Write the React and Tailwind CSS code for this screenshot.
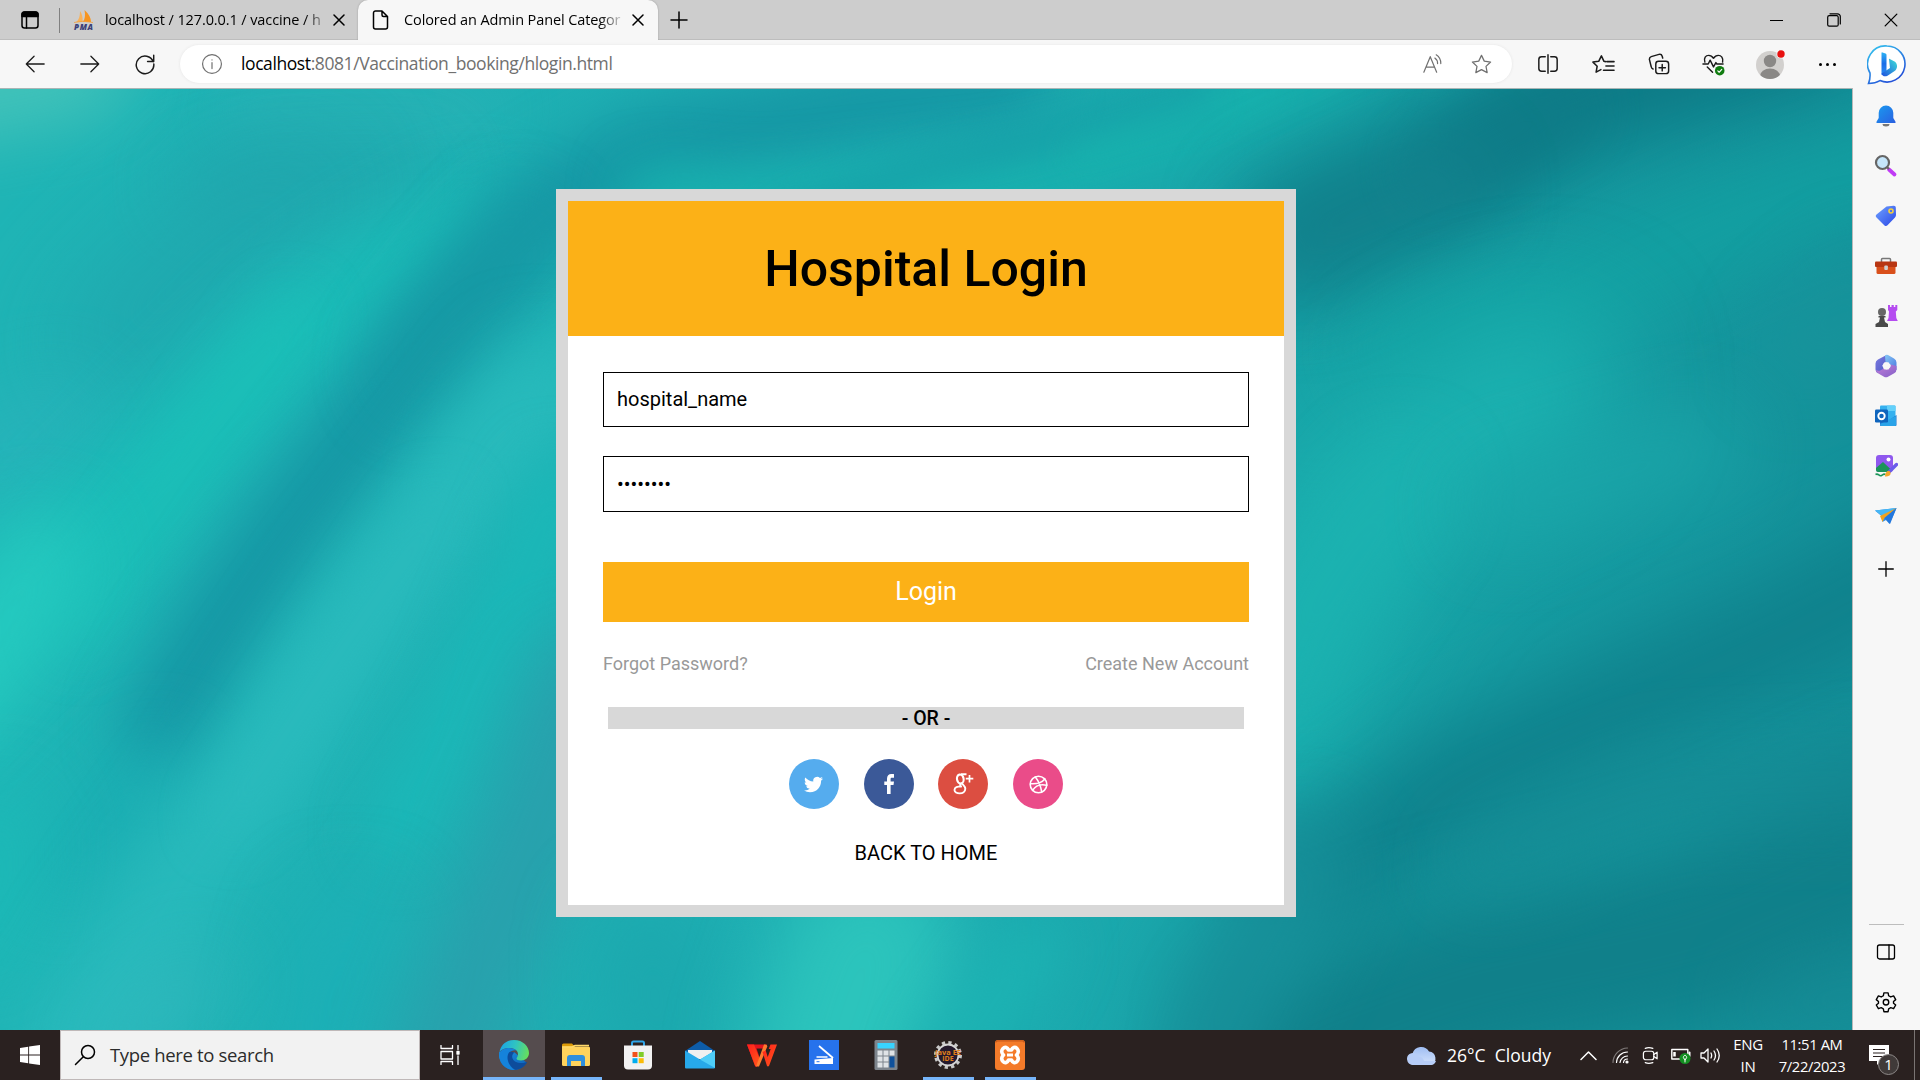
import React from "react";

const UI = "font-['Open_Sans','Noto_Sans',sans-serif]";

function Icon({ s = 24, vb = "0 0 24 24", w = 1.3, className = "", children }) {
  return (
    <svg width={s} height={s} viewBox={vb} fill="none" stroke="currentColor" strokeWidth={w} strokeLinecap="round" strokeLinejoin="round" className={`shrink-0 ${className}`}>
      {children}
    </svg>
  );
}

const Close = ({ s = 12, w = 1.3 }) => (
  <Icon s={s} vb="0 0 12 12" w={w}><path d="M1 1l10 10M11 1L1 11" /></Icon>
);

function TabBar() {
  return (
    <div className="flex h-10 w-full bg-[#cdcdcd] shadow-[inset_0_-1px_0_#bdbdbd]">
      <div className="flex w-[60px] items-center justify-end gap-[20px]">
        <Icon s={18} vb="0 0 18 18" w={1.5}>
          <rect x="1" y="1" width="16" height="16" rx="2.5" />
          <path d="M1 3.5a2.5 2.5 0 0 1 2.500-2.500h11a2.500 2.500 0 0 1 2.500 2.500V5.500H1z" fill="currentColor" />
          <path d="M5.500 6v11" />
        </Icon>
        <div className="h-[25px] w-px bg-[#808080]" />
      </div>
      <div className="flex w-[298px] items-center">
        <svg width="22" height="20" viewBox="0 0 22 20" className="ml-[13px] shrink-0">
          <path d="M3 12C6 10 7 6 7 1c2 3 3 6 2.500 11z" fill="#f8b25a" />
          <path d="M10 12c2-3 2.500-7 1.500-12C16 4 18 8 18 12z" fill="#f7941e" />
          <path d="M1 12.500q9-2.500 19 0" stroke="#f0a040" strokeWidth=".8" fill="none" />
          <text x="1" y="19.500" fontSize="8" fontWeight="800" fontStyle="italic" fontFamily="Open Sans" fill="#3b3f77" textLength="19">PMA</text>
        </svg>
        <div className="ml-[10px] w-[217px] whitespace-nowrap text-[14.500px] tracking-[-0.1px] text-black [mask-image:linear-gradient(90deg,#000_92%,transparent_104%)]">localhost / 127.0.0.1 / vaccine / h</div>
        <div className="ml-[11px]"><Close w={1.5} /></div>
      </div>
      <div className="flex w-[300px] items-center rounded-t-[10px] bg-[#f7f7f7] shadow-[0_0_2px_#999] [clip-path:inset(-4px_-4px_0_-4px)]">
        <Icon s={20} vb="0 0 20 20" w={1.500} className="ml-[13px]">
          <path d="M4.500 1H11l5.500 5.500V17a2 2 0 0 1-2 2h-10a2 2 0 0 1-2-2V3a2 2 0 0 1 2-2zM11 1v4a1.500 1.500 0 0 0 1.500 1.500h4" />
        </Icon>
        <div className="ml-[13px] w-[217px] whitespace-nowrap text-[14.500px] tracking-[-0.11px] text-black [mask-image:linear-gradient(90deg,#000_90%,transparent_102%)]">Colored an Admin Panel Categor</div>
        <div className="ml-[11px]"><Close w={1.500} /></div>
      </div>
      <div className="flex w-[42px] items-center justify-center"><Icon s={18} vb="0 0 18 18" w={1.500}><path d="M9 1v16M1 9h16" /></Icon></div>
      <div className="ml-auto flex items-center">
        <div className="flex w-[58px] justify-center"><div className="h-px w-[13px] bg-black" /></div>
        <div className="flex w-[57px] justify-center">
          <Icon s={14} vb="0 0 14 14" w={1.200}><rect x=".7" y="2.700" width="10.500" height="10.500" rx="1.500" /><path d="M3 .8h7.500a2.800 2.800 0 0 1 2.800 2.800V11" /></Icon>
        </div>
        <div className="flex w-[58px] justify-center"><Close s={14} w={1.100} /></div>
      </div>
    </div>
  );
}

const starPath = "M12 2.500l2.900 6 6.600.9-4.800 4.600 1.200 6.500L12 17.400l-5.900 3.100 1.200-6.500L2.500 9.400l6.600-.9z";

function Toolbar() {
  return (
    <div className="flex h-12 w-full items-center bg-[#f7f7f7] text-[#1b1b1b]">
      <div className="flex w-[173px] pl-[7px]">
        <div className="flex w-[55px] justify-center"><Icon s={22} w={1.400}><path d="M22 12H2.500M11 3.500L2.500 12l8.500 8.500" /></Icon></div>
        <div className="flex w-[55px] justify-center"><Icon s={22} w={1.400}><path d="M2 12h19.500M13 3.500l8.500 8.500-8.500 8.500" /></Icon></div>
        <div className="flex w-[55px] justify-center"><Icon s={22} w={1.600}><path d="M21 9.500A9.600 9.600 0 1 0 21.600 12M21.500 2.500v6.700h-6.700" /></Icon></div>
      </div>
      <div className="ml-[7px] flex h-[38px] w-[1332px] items-center rounded-full bg-white text-[#707070] shadow-[0_0_3px_#e4e4e4]">
        <Icon s={22} w={1.300} className="ml-[21px]"><circle cx="12" cy="12" r="10.300" /><path d="M12 10.500v6.500M12 7.400v.2" /></Icon>
        <div className="ml-[18px] mb-px whitespace-nowrap text-[17.500px] tracking-[-0.41px]"><span className="text-black">localhost</span>:8081/Vaccination_booking/hlogin.html</div>
        <Icon s={22} w={1.300} className="ml-auto"><path d="M2 21L9 4l7 17M4.500 15.500h9M14 5.500a7 7 0 0 1 3 6M15.500 2a11 11 0 0 1 5 9.500" /></Icon>
        <Icon s={23} w={1.300} className="ml-[26px] mr-[19px]"><path d={starPath} /></Icon>
      </div>
      <div className="ml-[8px] flex flex-1 items-center">
        <div className="flex w-[55px] justify-center"><Icon s={22} w={1.600}><path d="M12 2v20M9 4H5a3 3 0 0 0-3 3v10a3 3 0 0 0 3 3h4M15 4h4a3 3 0 0 1 3 3v10a3 3 0 0 1-3 3h-4" /></Icon></div>
        <div className="flex w-[56px] justify-center"><Icon s={23} w={1.600}><path d="M14 9l-1.500-.3L9.800 3 7 8.700 1 9.500l4.400 4.300L4.300 20l5-2.600M15.500 9H23M14.500 13.500H23M12 18h11" /></Icon></div>
        <div className="flex w-[55px] justify-center"><Icon s={22} w={1.600}><rect x="8.500" y="9" width="14" height="13.500" rx="3" /><path d="M15.500 12.500v7M12 16h7M5.500 17.500A3 3 0 0 1 3.500 15L1.500 7A3 3 0 0 1 3.500 4L12 1.500A3 3 0 0 1 15.500 3.500L16 5.500" /></Icon></div>
        <div className="flex w-[55px] justify-center">
          <Icon s={23} w={1.500}>
            <path d="M3 9.500C1.500 5 4 2.500 7 2.500c2.500 0 4 1.500 5 3 1-1.500 2.500-3 5-3 3 0 5.500 2.500 4.500 7M1 11.500h5.500l2-4 3.500 7 2.500-4.500 1 1.500H22M5.500 14.500l5.500 5.500" />
            <circle cx="18.500" cy="18.500" r="5" fill="#107c10" stroke="none" /><path d="M16.500 18.700l1.400 1.400 2.700-3" stroke="#fff" strokeWidth="1.200" />
          </Icon>
        </div>
        <div className="flex w-[59px] justify-center">
          <svg width="32" height="34" viewBox="0 0 32 34" className="shrink-0">
            <defs><clipPath id="avatar"><circle cx="15" cy="18" r="14" /></clipPath></defs>
            <circle cx="15" cy="18" r="14" fill="#d2d0ce" />
            <g clipPath="url(#avatar)" fill="#8a8886"><circle cx="15" cy="14" r="6.200" /><ellipse cx="15" cy="29" rx="10" ry="7.500" /></g>
            <circle cx="26" cy="7" r="4.500" fill="#f7f7f7" /><circle cx="26" cy="7" r="3.700" fill="#e81010" />
          </svg>
        </div>
        <div className="flex w-[55px] justify-center gap-[4px]"><i className="size-[3px] rounded-full bg-black" /><i className="size-[3px] rounded-full bg-black" /><i className="size-[3px] rounded-full bg-black" /></div>
        <svg width="40" height="42" viewBox="0 0 40 42" className="ml-[12px]">
          <defs>
            <linearGradient id="bingRing" x1="0" y1="0" x2=".6" y2="1"><stop stopColor="#35c8ef" /><stop offset="1" stopColor="#2450d8" /></linearGradient>
            <linearGradient id="bingB" x1="0" y1="0" x2="0" y2="1"><stop stopColor="#2cb4f5" /><stop offset=".5" stopColor="#1b6de8" /><stop offset="1" stopColor="#2b8cf4" /></linearGradient>
            <linearGradient id="bingC" x1="0" y1="1" x2="1" y2="0"><stop stopColor="#1e50df" /><stop offset="1" stopColor="#3fe0d8" /></linearGradient>
          </defs>
          <path d="M20 3a18 18 0 1 1-7 34.600C9 40 5 40.500 1.500 40.500 3 37 3.300 34 3 30A18 18 0 0 1 20 3z" fill="#fff" stroke="url(#bingRing)" strokeWidth="1.600" />
          <path d="M14.500 10q0-1 1-.6l3 1.200q1 .4 1 1.500V28l-5 4z" fill="url(#bingB)" />
          <path d="M22 16.500q-.4-1 .8-.6l5.200 2.800c3 2.500 2.500 7 0 9l-7.500 5c-2.500 1.300-5.500.5-6-2.200l8.500-5.500z" fill="url(#bingC)" />
        </svg>
      </div>
    </div>
  );
}

function Backdrop() {
  const line = (pts, c, w, b = "b35", o = 1) => (
    <polyline points={pts} stroke={c} strokeWidth={w} opacity={o} fill="none" strokeLinejoin="round" strokeLinecap="round" filter={`url(#${b})`} />
  );
  return (
    <svg viewBox="0 0 1852 942" preserveAspectRatio="none" className="absolute inset-0 size-full">
      <defs>
        <linearGradient id="base" x1="0" x2="1"><stop stopColor="#1fb4b5" /><stop offset=".5" stopColor="#1eadb2" /><stop offset=".72" stopColor="#17a2a6" /><stop offset="1" stopColor="#14919a" /></linearGradient>
        {[["b18", 16], ["b25", 27], ["b35", 38], ["b50", 54]].map(([id, d]) => (
          <filter key={id} id={id} filterUnits="userSpaceOnUse" x="-300" y="-300" width="2500" height="1600" colorInterpolationFilters="sRGB"><feGaussianBlur stdDeviation={d} /></filter>
        ))}
      </defs>
      <rect width="1852" height="942" fill="url(#base)" />
      {line("-120,20 90,-20", "#55cbbd", 80, "b35", 0.8)}
      {line("250,20 480,20", "#2bb3b6", 50, "b25", 0.8)}
      {line("200,95 420,85", "#22a2aa", 50, "b35", 0.8)}
      {line("300,100 170,200 110,260", "#20a5ad", 100, "b50", 0.95)}
      {line("-20,370 60,330", "#2ab3bc", 80, "b35", 0.8)}
      {line("480,140 380,190 290,250 200,340 110,430 20,520 -60,600", "#1bbfb9", 84, "b35", 0.95)}
      {line("290,230 220,330 150,440 80,540", "#1bc2b8", 50, "b25", 0.65)}
      {line("40,470 -20,580 -80,640", "#28cec2", 90, "b35", 0.85)}
      {line("1000,-10 870,15 660,60 540,125 445,230 375,330 290,440 215,550 165,640", "#1698a5", 92, "b25")}
      {line("520,150 420,280", "#179aa4", 70, "b35", 0.6)}
      {line("160,680 60,780", "#19abb2", 70, "b35", 0.8)}
      {line("0,740 -20,840", "#1cbbb8", 100, "b35", 0.8)}
      {line("640,200 540,310 460,400", "#23bab9", 60, "b25", 0.9)}
      {line("540,300 460,400 360,530 245,700 140,850 60,980", "#2abbbd", 84, "b35")}
      {line("440,420 330,580 230,730", "#2dbdbf", 40, "b25", 0.6)}
      {line("560,400 480,590 400,740", "#1bb8b8", 66, "b25")}
      {line("350,850 320,970", "#1cafb6", 100, "b35")}
      {line("200,890 120,960", "#34b9bf", 60, "b35", 0.8)}
      {line("585,600 540,740 470,900 440,980", "#2b9dab", 96, "b35", 0.9)}
      {line("650,860 660,960", "#1ca8ae", 110, "b35")}
      {line("870,860 830,980", "#2cc4bc", 170, "b35")}
      {line("1030,860 950,980", "#1cb3b3", 60, "b25")}
      {line("1340,-25 1180,45 1030,90 760,115 650,105", "#17b2ae", 52, "b25")}
      {line("1200,10 940,75 780,130", "#169da7", 30, "b18", 0.75)}
      {line("1270,0 1080,65", "#18b4ae", 22, "b18", 0.7)}
      {line("1800,-60 1560,10 1440,90 1300,150", "#0d7985", 120, "b35")}
      {line("1560,20 1440,80", "#0f7c88", 60, "b25", 0.8)}
      {line("1440,100 1290,170", "#188b95", 90, "b35", 0.5)}
      {line("1930,60 1750,125 1570,215 1400,260", "#12a3a3", 80, "b35", 0.9)}
      {line("1540,300 1380,400 1290,540 1260,640", "#1cb3b1", 150, "b50", 1)}
      {line("1400,400 1290,560", "#1cb3b1", 80, "b35", 0.6)}
      {line("1700,360 1500,420", "#1ba7aa", 80, "b35", 0.8)}
      {line("1870,200 1800,260", "#1a949b", 80, "b35", 0.6)}
      {line("1950,460 1800,540 1620,620 1450,700 1320,800", "#0f818c", 120, "b35", 0.95)}
      {line("1900,760 1700,850 1460,900 1300,960", "#10808a", 180, "b35")}
      {line("1900,690 1650,700 1480,770", "#168993", 60, "b35", 0.85)}
      {line("1300,780 1230,900 1200,980", "#178f99", 110, "b35", 0.9)}
      {line("1900,900 1780,920", "#188893", 60, "b35", 0.6)}
    </svg>
  );
}

function Social({ color, children }) {
  return <div className={`flex size-[50px] items-center justify-center rounded-full text-white ${color}`}>{children}</div>;
}

function LoginCard() {
  return (
    <div className="relative mt-[100px] ml-[556px] h-[728px] w-[740px] border-[12px] border-[#d8d8d8] bg-white font-[Roboto,sans-serif] text-black">
      <div className="flex h-[135px] items-center justify-center bg-[#fcb117] text-[50px] font-medium leading-none"><span>Hospital Login</span></div>
      <div className="flex flex-col px-[35px] pt-[36px]">
        <div className="flex h-[55px] items-center border border-black pb-[2px] pl-[13px] text-[20px]">hospital_name</div>
        <div className="mt-[29px] flex h-[56px] items-center border border-black pl-[13px] text-[20px]">••••••••</div>
        <div className="mt-[50px] flex h-[60px] items-center justify-center bg-[#fcb117] text-[25px] text-white">Login</div>
        <div className="mt-[27px] flex h-[28px] items-center justify-between text-[18px] text-[#999]"><span>Forgot Password?</span><span>Create New Account</span></div>
        <div className="mx-[5px] mt-[30px] flex h-[22px] items-center justify-center bg-[#d8d8d8] pt-px text-[19.500px] font-medium">- OR -</div>
        <div className="mt-[30px] flex justify-center gap-[24.700px]">
          <Social color="bg-[#55acee]">
            <svg width="19" height="19" viewBox="0 0 24 24" fill="currentColor"><path d="M23.950 4.570a10 10 0 0 1-2.820.770 4.960 4.960 0 0 0 2.160-2.720c-.950.550-2 .950-3.130 1.180a4.920 4.920 0 0 0-8.380 4.480C7.690 8.090 4.070 6.130 1.640 3.160a4.820 4.820 0 0 0-.670 2.480c0 1.710.870 3.210 2.190 4.100a4.900 4.900 0 0 1-2.230-.620v.060a4.920 4.920 0 0 0 3.950 4.830 5 5 0 0 1-2.210.080 4.940 4.940 0 0 0 4.600 3.420A9.870 9.870 0 0 1 0 19.540a14 14 0 0 0 7.550 2.210c9.050 0 14-7.500 14-13.980 0-.210 0-.420-.020-.630a9.940 9.940 0 0 0 2.460-2.550z" /></svg>
          </Social>
          <Social color="bg-[#3b5998]">
            <svg width="10" height="20" viewBox="0 0 10 19.500" preserveAspectRatio="none" fill="currentColor"><path d="M10 .2v3.400H8.100C6.900 3.600 6.600 4.100 6.600 5v2.200H10l-.5 3.500H6.600V19.500H3V10.700H.3V7.200H3V4.600C3 1.800 4.700.1 7.300.1 8.600.1 9.600.2 10 .2z" /></svg>
          </Social>
          <Social color="bg-[#dc4e41]">
            <svg width="21" height="22" viewBox="0 0 21 22" fill="none" stroke="currentColor">
              <ellipse cx="7.300" cy="6" rx="3.300" ry="4.500" strokeWidth="2.100" transform="rotate(-12 7.300 6)" />
              <path d="M13.500 1.200H8M9 10.300c.5 1.500 3.300 2.700 3.300 5.500 0 3-2.600 4.600-5.600 4.600S1.500 19 1.500 16.900c0-2.700 3-3.500 6.400-3.500M8 10.500c-1.500 1-1 2.500.8 3.300" strokeWidth="1.900" />
              <path d="M16.500 2v7.500M12.800 5.700h7.500" strokeWidth="1.700" />
            </svg>
          </Social>
          <Social color="bg-[#ea4c89]">
            <Icon s={19} vb="0 0 24 24" w={2}><circle cx="12" cy="12" r="10.500" /><path d="M8 2.500c4 5 6.500 10 8 18.500M20 5c-4 5-10 6.500-18 6M4.500 19.500c4-6.500 10-8.500 18-6.500" /></Icon>
          </Social>
        </div>
        <div className="mt-[30px] flex h-[28px] items-center justify-center text-[20px]">BACK TO HOME</div>
      </div>
    </div>
  );
}

const Slot = ({ children }) => <div className="flex h-[50px] w-full items-center justify-center">{children}</div>;
const G = ({ children, s = 24 }) => <svg width={s} height={s} viewBox="0 0 24 24" fill="none" className="shrink-0">{children}</svg>;
const Grad = ({ id, a, b }) => <linearGradient id={id} x1="0" y1="0" x2="1" y2="1"><stop stopColor={a} /><stop offset="1" stopColor={b} /></linearGradient>;

function Sidebar() {
  return (
    <div className="flex w-[68px] flex-col items-center border-l border-[#b9b9b9] bg-[#f7f7f7] pt-[3px] pr-px">
      <Slot><G><defs><Grad id="bell" a="#1a9bf0" b="#2a5fe0" /></defs><path d="M8.500 20h7a3.500 2.500 0 0 1-7 0z" fill="#777" /><path d="M12 1.500a7.300 7.300 0 0 1 7.300 7.300v5.200l2.200 3.700v1.300h-19v-1.300L4.700 14V8.800A7.300 7.300 0 0 1 12 1.500z" fill="url(#bell)" /></G></Slot>
      <Slot><G><path d="M15 15.500l5.500 5" stroke="#c03bf5" strokeWidth="3.800" strokeLinecap="round" /><path d="M13 13l2 2" stroke="#666" strokeWidth="2" /><circle cx="8.500" cy="8.500" r="6.500" fill="#c5e6fb" stroke="#656565" strokeWidth="2.200" /></G></Slot>
      <Slot><G><defs><Grad id="tag" a="#6fa2ff" b="#2a47e6" /></defs><path d="M12.500 2.500l7-.8c1.500-.1 2.300.7 2.300 2.100L22 11c0 1-.3 1.700-1 2.400l-7.500 7.900c-1 1-2 1-3 .1L2.500 13.500c-1-1-1-2 0-3z" fill="url(#tag)" /><circle cx="17" cy="7" r="2" stroke="#f5cf3c" strokeWidth="1.600" /></G></Slot>
      <Slot><G><path d="M7.500 8V5.500q0-1 1-1h7q1 0 1 1V8" stroke="#777" strokeWidth="1.500" /><path d="M2.500 10h19v8.500q0 1.500-1.500 1.500H4q-1.500 0-1.500-1.500z" fill="#d9501b" /><rect x="1" y="7.500" width="22" height="5.500" rx="1" fill="#b83612" /><rect x="10.300" y="11.500" width="3.600" height="4.500" rx="1" fill="#cfcfcf" /></G></Slot>
      <Slot><G><path d="M14 1h2v2h1.500V1h2.300v2h1.500V1h2v5l-1.500 1.500.5 6.500 1.500 3H13l1.500-3 .5-6.500L14 6z" fill="#b54cf0" /><circle cx="8" cy="8" r="4" fill="#666" /><path d="M4.500 12h7v1.500h-1.500l1 4.500 3 2v3H1.500v-3l3.500-2 1-4.500H4.500z" fill="#4a4a4a" /></G></Slot>
      <Slot><G>
        <defs><Grad id="mL" a="#7d7be0" b="#4a57c4" /><Grad id="mR" a="#86c8f5" b="#4a78e0" /><Grad id="mB" a="#c17fd8" b="#8560c8" /></defs>
        <path d="M13 .8L4 5.500Q1.500 7 1.500 9.500v6Q1.500 18 4 19.300l5.500-3.500V9.500L15 7z" fill="url(#mL)" />
        <path d="M11 1.500q1.800-1.200 3.500-.3L20 4.500q2.500 1.500 2.500 4v7.500l-6-1.500v-4L11.500 8Z" fill="url(#mR)" />
        <path d="M22.500 12v3.500q0 2.500-2.300 3.800L14 22.700q-2 1-4 0L4 19.300q-2-1.300-2.300-3.300 2.500 1.500 5 .3l4-2.300 2 1.500 4-2.500V10.500z" fill="url(#mB)" />
        <path d="M10.500 8.200h4l2.300 3.600-2.300 3.700h-4l-2.300-3.700z" fill="#f7f7f7" />
      </G></Slot>
      <Slot><G><rect x="6" y="1.500" width="15.500" height="20" rx="1" fill="#35b1ef" /><path d="M13 1.500h7.500q1 0 1 1V7H13z" fill="#63d0fa" /><path d="M6 12l8 5 8.500-6v10q0 1-1 1H7q-1 0-1-1z" fill="#1c72cd" /><path d="M6 20l16-8v9q0 1-1 1H7z" fill="#2aa3e8" /><rect x="1" y="5.500" width="13" height="13" rx="1.300" fill="#0f65bd" /><circle cx="7.500" cy="12" r="3.200" stroke="#fff" strokeWidth="1.900" /></G></Slot>
      <Slot><G><rect x="2" y="1" width="17" height="17" rx="3" fill="#8f58ee" /><path d="M2 14l7-6 8.500 8-3 2H4q-2 0-2-2z" fill="#1b9559" /><circle cx="14.500" cy="5.500" r="2" fill="#fff" /><path d="M1.500 20.500c3-2 3.500 2.500 6 1s2-2 4-1" stroke="#1b9559" strokeWidth="1.600" /><path d="M22.500 10.500L15 18" stroke="#6a5bea" strokeWidth="3.400" strokeLinecap="round" /><path d="M11 22.500c0-4 2-6 4-5.500s2 3.500.5 4.500-3 1.200-4.500 1z" fill="#f4a72c" /></G></Slot>
      <Slot><G><path d="M1 6.500L22.500 4l-7 16-3.500-4-3.500 2-1-6z" fill="#2a8de8" /><path d="M1 6.500L22.500 4 8 12z" fill="#46b7f5" /><path d="M22.500 4L6 12l2.500 6 2-4z" fill="#f0a21f" /><path d="M22.500 4l-12 10 5.500 6z" fill="#2377dd" /></G></Slot>
      <div className="mt-[20px]"><Icon s={16} vb="0 0 16 16" w={1.300} className="text-black"><path d="M8 .7v14.600M.7 8h14.600" /></Icon></div>
      <div className="mt-auto h-px w-[35px] bg-[#bdbdbd]" />
      <div className="mt-[2px] mb-[3px] flex flex-col text-black">
        <Slot><Icon s={20} vb="0 0 20 20" w={1.300}><rect x="1.500" y="3" width="17" height="14" rx="2" /><path d="M13 3v14" /></Icon></Slot>
        <Slot><Icon s={22} w={1.500}><path d="M9.700 2h4.600l.6 3.200 2.300 1.300 3.100-1.100 2.300 4L20.200 11.500v1.800l2.400 2-2.300 4-3.100-1.100-2.300 1.300-.6 3.100H9.700l-.6-3.100-2.300-1.300-3.100 1.100-2.300-4 2.400-2v-1.800l-2.400-2.100 2.300-4 3.100 1.100 2.300-1.300z" /><circle cx="12" cy="12.300" r="3" /></Icon></Slot>
      </div>
    </div>
  );
}

function TaskButton({ active, line, children }) {
  return (
    <div className={`flex h-full w-[62px] flex-col items-center ${active ? "bg-[#554c4e]" : ""}`}>
      <div className="flex h-[47px] items-center justify-center pt-[3px]">{children}</div>
      <div className={`h-[3px] ${active ? "w-full" : "w-[51px]"} ${line ? "bg-[#76b5fa]" : ""}`} />
    </div>
  );
}
const P = ({ children }) => <svg width="30" height="30" viewBox="0 0 30 30" fill="none" className="shrink-0">{children}</svg>;

function Taskbar() {
  return (
    <div className={`flex h-[50px] w-full bg-[#2a2120] text-white ${UI}`}>
      <div className="flex w-[60px] items-center justify-center"><svg width="20" height="20" viewBox="0 0 20 20" fill="#fff"><path d="M0 2.900l8.200-1.200v7.800H0zM9.100 1.500L20 0v9.500H9.100zM0 10.500h8.200v7.800L0 17.100zM9.100 10.500H20V20L9.100 18.500z" /></svg></div>
      <div className="flex w-[360px] items-center border border-[#bfb8b8] bg-[#f2f2f2] text-[#2b2b2b]">
        <Icon s={22} vb="0 0 22 22" w={1.500} className="ml-[13px] text-black"><circle cx="14" cy="8" r="6.500" /><path d="M9.300 12.700L1.500 20.500" /></Icon>
        <span className="ml-[14px] whitespace-nowrap text-[18.500px] tracking-[-0.34px]">Type here to search</span>
      </div>
      <div className="flex w-[63px] items-center justify-center pr-[3px]"><Icon s={20} vb="0 0 20 20" w={1.300}><path d="M1 .5V3.500h11.500V.5M1 19.500v-3h11.500v3M1 6.500h11.500v7.500H1zM18 .5v4M18 11v8.500" /><rect x="17" y="6.500" width="2" height="2.500" fill="#fff" /></Icon></div>
      <TaskButton active line>
        <P><defs>
          <linearGradient id="eTop" x1="0" y1=".4" x2="1" y2=".6"><stop stopColor="#1ba6e6" /><stop offset=".5" stopColor="#30c4c0" /><stop offset="1" stopColor="#68e05a" /></linearGradient>
          <linearGradient id="eLow" x1="0" y1="0" x2="1" y2="1"><stop stopColor="#1a94e2" /><stop offset="1" stopColor="#0c5bb5" /></linearGradient></defs>
          <path d="M.3 12A15 15 0 0 0 15 30c5.500 0 10-3 12.500-7.500L15 12z" fill="url(#eLow)" />
          <path d="M.5 12C2 4 8 0 15 0c9 0 15 6.500 15 13 0 4.500-3.500 7.500-8 7.500-3 0-4.500-1-4.500-2 0-1 1.500-1.500 1.500-4.500 0-3.500-4-6-8.500-6C6 8 2.500 9.500.5 12z" fill="url(#eTop)" />
          <path d="M.3 13C2 9.500 6 8 10.500 8c3 0 5.500 1 7 2.500-3-.5-5.500.5-7 2.500-3 5-1 13 5 17C6 30-.5 22.500.3 13z" fill="#1583db" />
          <path d="M10.500 12c-4 4-2 14 6 17.800 4.500-.3 9-2.800 11.300-7 .2-.8-.3-1-.8-.6-5 2-12.500.8-13.800-5-.2-2 .8-3.800 2.300-4.700-2-1-3.800-1-5-.5z" fill="#0d4c9c" />
        </P>
      </TaskButton>
      <TaskButton line><P><path d="M1 5q0-1.500 1.500-1.500H11L14 7v3H1z" fill="#dc9b08" /><rect x="1" y="6.500" width="28" height="19.500" rx="1.500" fill="#ffd35c" /><path d="M1 7h10l3-1.500H28" stroke="#ffd969" strokeWidth="1.500" /><path d="M6 26v-8q0-3 3-3h12q3 0 3 3v8h-4v-5H10v5z" fill="#2f8fdc" /></P></TaskButton>
      <TaskButton><P><path d="M9 7V3q0-1.500 1.500-1.500h9Q21 1.500 21 3v4" stroke="#2fa5e8" strokeWidth="2" /><path d="M1 5.500h28v20q0 4-4 4H5q-4 0-4-4z" fill="#f2f2f2" /><path d="M9.500 12h5v5h-5z" fill="#f1511b" /><path d="M15.700 12h5v5h-5z" fill="#80cc28" /><path d="M9.500 18.200h5v5h-5z" fill="#00adef" /><path d="M15.700 18.200h5v5h-5z" fill="#fbbc09" /></P></TaskButton>
      <TaskButton><P><path d="M0 11L15 1l15 10v5H0z" fill="#0d5ca8" /><path d="M3 10h24v9H3z" fill="#f0f0f0" /><path d="M0 10.500l15 9 15-9V27.500q0 1-1 1H1q-1 0-1-1z" fill="#27a9ea" /><path d="M15 19.500l15-9V28z" fill="#4fcdf8" /></P></TaskButton>
      <TaskButton><P>
        <defs><Grad id="wps" a="#ff1d1d" b="#ff5a1a" /></defs>
        <path d="M0 4.500h20l-1.800 4H9.500l3.500 10-3 8q-1 .8-1.800 0z" fill="#e3131c" />
        <path d="M0 4.500h7l5.500 14-2.500 7q-1 1.500-2 0z" fill="url(#wps)" />
        <path d="M9 26.500l8-22q3.500-.5 3.300 2L12 26.500z" fill="#ff7a2f" />
        <path d="M15.500 12l4.500 14q1.200 1 2.200-.5L30 4.500h-6.500l-1.800 4.500h2l-3 8-2-6.500z" fill="url(#wps)" />
      </P></TaskButton>
      <TaskButton><P><path d="M0 0h30v30H0z" fill="#2672ec" /><path d="M10 6l14 12" stroke="#fff" strokeWidth="1.800" /><path d="M7.500 17h11" stroke="#fff" strokeWidth="1.500" /><path d="M5.500 19.500L24 18v6H5.500z" fill="#fff" /><path d="M7.500 21.700h3" stroke="#2672ec" strokeWidth="1" /></P></TaskButton>
      <TaskButton><P><rect x="3.500" y="0" width="23" height="30" rx="1.500" fill="#7d858d" /><path d="M6.500 3h17v5.500h-17z" fill="#38d3ff" /><path d="M6.500 10.500h5v5h-5zM12.500 10.500h5v5h-5zM18.500 10.500h5v5h-5zM6.500 16.500h5v5h-5zM12.500 16.500h5v5h-5zM6.500 22.500h5v5h-5zM12.500 22.500h5v5h-5z" fill="#dfe3e6" /><path d="M18.500 16.500h5v11h-5z" fill="#0f519c" /></P></TaskButton>
      <TaskButton line><P><circle cx="15" cy="15" r="12.500" stroke="#c9c9c9" strokeWidth="3" strokeDasharray="3.270 3.270" /><circle cx="15" cy="15" r="10.500" fill="#251a2d" stroke="#d5d5d5" strokeWidth="1.800" /><text x="2" y="14.500" fontSize="7.500" fontWeight="700" fontFamily="Open Sans" fill="#e0801c" textLength="26" lengthAdjust="spacingAndGlyphs">Java EE</text><text x="15" y="21" fontSize="7" fontWeight="700" textAnchor="middle" fontFamily="Open Sans" fill="#e0801c">IDE</text></P></TaskButton>
      <TaskButton line><P><rect width="30" height="30" rx="3" fill="#f47b2a" /><path d="M1 2.500Q1 .8 3 .8H27q2 0 2 1.700" stroke="#c85a1a" strokeWidth="1.200" /><path d="M8 8.500c2-2 4.500-1 5.500 1.500h3c1-2.500 3.500-3.500 5.500-1.500s1.500 4.500-.5 6.500c2 2 2.500 4.500.5 6.500s-4.500 1-5.500-1.500h-3c-1 2.500-3.500 3.500-5.500 1.500s-1.500-4.500.5-6.500c-2-2-2.500-4.500-.5-6.500z" stroke="#fff" strokeWidth="3.600" strokeLinejoin="round" /><path d="M12 15h6" stroke="#fff" strokeWidth="3" /></P></TaskButton>

      <div className="ml-auto flex items-center">
        <svg width="30" height="20" viewBox="0 0 30 20"><defs><linearGradient id="cloud" x1="0" y1="0" x2="0" y2="1"><stop stopColor="#9fbdf2" /><stop offset="1" stopColor="#d4e3fc" /></linearGradient></defs><path d="M6 20a6 6 0 0 1-.5-11.500A9 9 0 0 1 22 6.500 7 7 0 0 1 24 20z" fill="url(#cloud)" /><path d="M6 20a6 6 0 1 1 5.500-8.500c3 0 5 2 5.500 4.500h12q-1.500 4-5 4z" fill="#b7cdf7" /></svg>
        <span className="ml-[10px] w-[114px] whitespace-pre text-[17.500px] tracking-[0.03px]">26°C  Cloudy</span>
      </div>
      <div className="flex items-center pl-[19px]">
        <Icon s={17} vb="0 0 17 17" w={1.500}><path d="M1 12.500L8.500 5l7.500 7.500" /></Icon>
        <Icon s={17} vb="0 0 17 17" w={1.200} className="ml-[15px]"><path d="M1 15.500A15 15 0 0 1 15.500 1" opacity=".4" /><path d="M4.500 15.500A11 11 0 0 1 15.500 5M8 15.500A7.500 7.500 0 0 1 15.500 9M11.500 15.500a4 4 0 0 1 4-3.500" /><circle cx="15" cy="15" r="1" fill="#fff" /></Icon>
        <Icon s={17} vb="0 0 17 18" w={1.300} className="ml-[13px]"><rect x="1" y="4.500" width="11" height="9" rx="2.500" /><path d="M12 8l3.500-2.500v7L12 10M3 1.500q3.500-1.500 8 0M3 16.500q3.500 1.500 8 0" /></Icon>
        <Icon s={20} vb="0 0 20 20" w={1.400} className="ml-[12px]"><rect x=".8" y="4.500" width="16" height="9.500" /><path d="M18.500 7.500v3.500" strokeWidth="2" /><path d="M3.500 7v4.500" strokeWidth="2.500" strokeLinecap="butt" /><circle cx="14" cy="13.500" r="5.500" fill="#149022" stroke="none" /><path d="M14 17v-3M14 14.500c-2.500-1-2-3 0-4.500 2 1.500 2.500 3.500 0 4.500z" strokeWidth="1" /></Icon>
        <Icon s={21} vb="0 0 21 18" w={1.300} className="ml-[9px]"><path d="M1 6.500h3L8 2.500v13l-4-4H1zM11 6.500q1.300 2.500 0 5M14 4.500q3 4.500 0 9M17 2.500q4.500 6.500 0 13" /></Icon>
      </div>
      <div className="ml-[7px] flex w-[40px] flex-col items-center justify-center text-[15px] leading-[22px] tracking-[-0.3px]"><span>ENG</span><span>IN</span></div>
      <div className="ml-[2px] flex w-[84px] flex-col items-center justify-center whitespace-nowrap text-[14.800px] leading-[22px] tracking-[-0.4px]"><span>11:51 AM</span><span>7/22/2023</span></div>
      <svg width="32" height="34" viewBox="0 0 32 34" className="ml-[14px] mt-[13px]">
        <path d="M1 2h20v16h-8l-4 4v-4H1z" fill="#fff" /><path d="M5 6.500h12M5 10h12M5 13.500h12" stroke="#2a2120" strokeWidth="1.200" />
        <circle cx="20.500" cy="21.500" r="10" fill="#403a39" stroke="#8d8988" /><text x="20.500" y="27" textAnchor="middle" fontSize="15" fill="#fff" fontFamily="Open Sans">1</text>
      </svg>
      <div className="ml-[14px] mr-[5px] w-px bg-[#7a7473]" />
    </div>
  );
}

export default function App() {
  return (
    <div className={`flex h-[1080px] w-[1920px] flex-col overflow-hidden bg-[#f7f7f7] ${UI}`}>
      <TabBar />
      <Toolbar />
      <div className="flex h-[942px]">
        <div className="relative w-[1852px] overflow-hidden border-t border-[#a9b5b5]">
          <Backdrop />
          <LoginCard />
        </div>
        <Sidebar />
      </div>
      <Taskbar />
    </div>
  );
}
